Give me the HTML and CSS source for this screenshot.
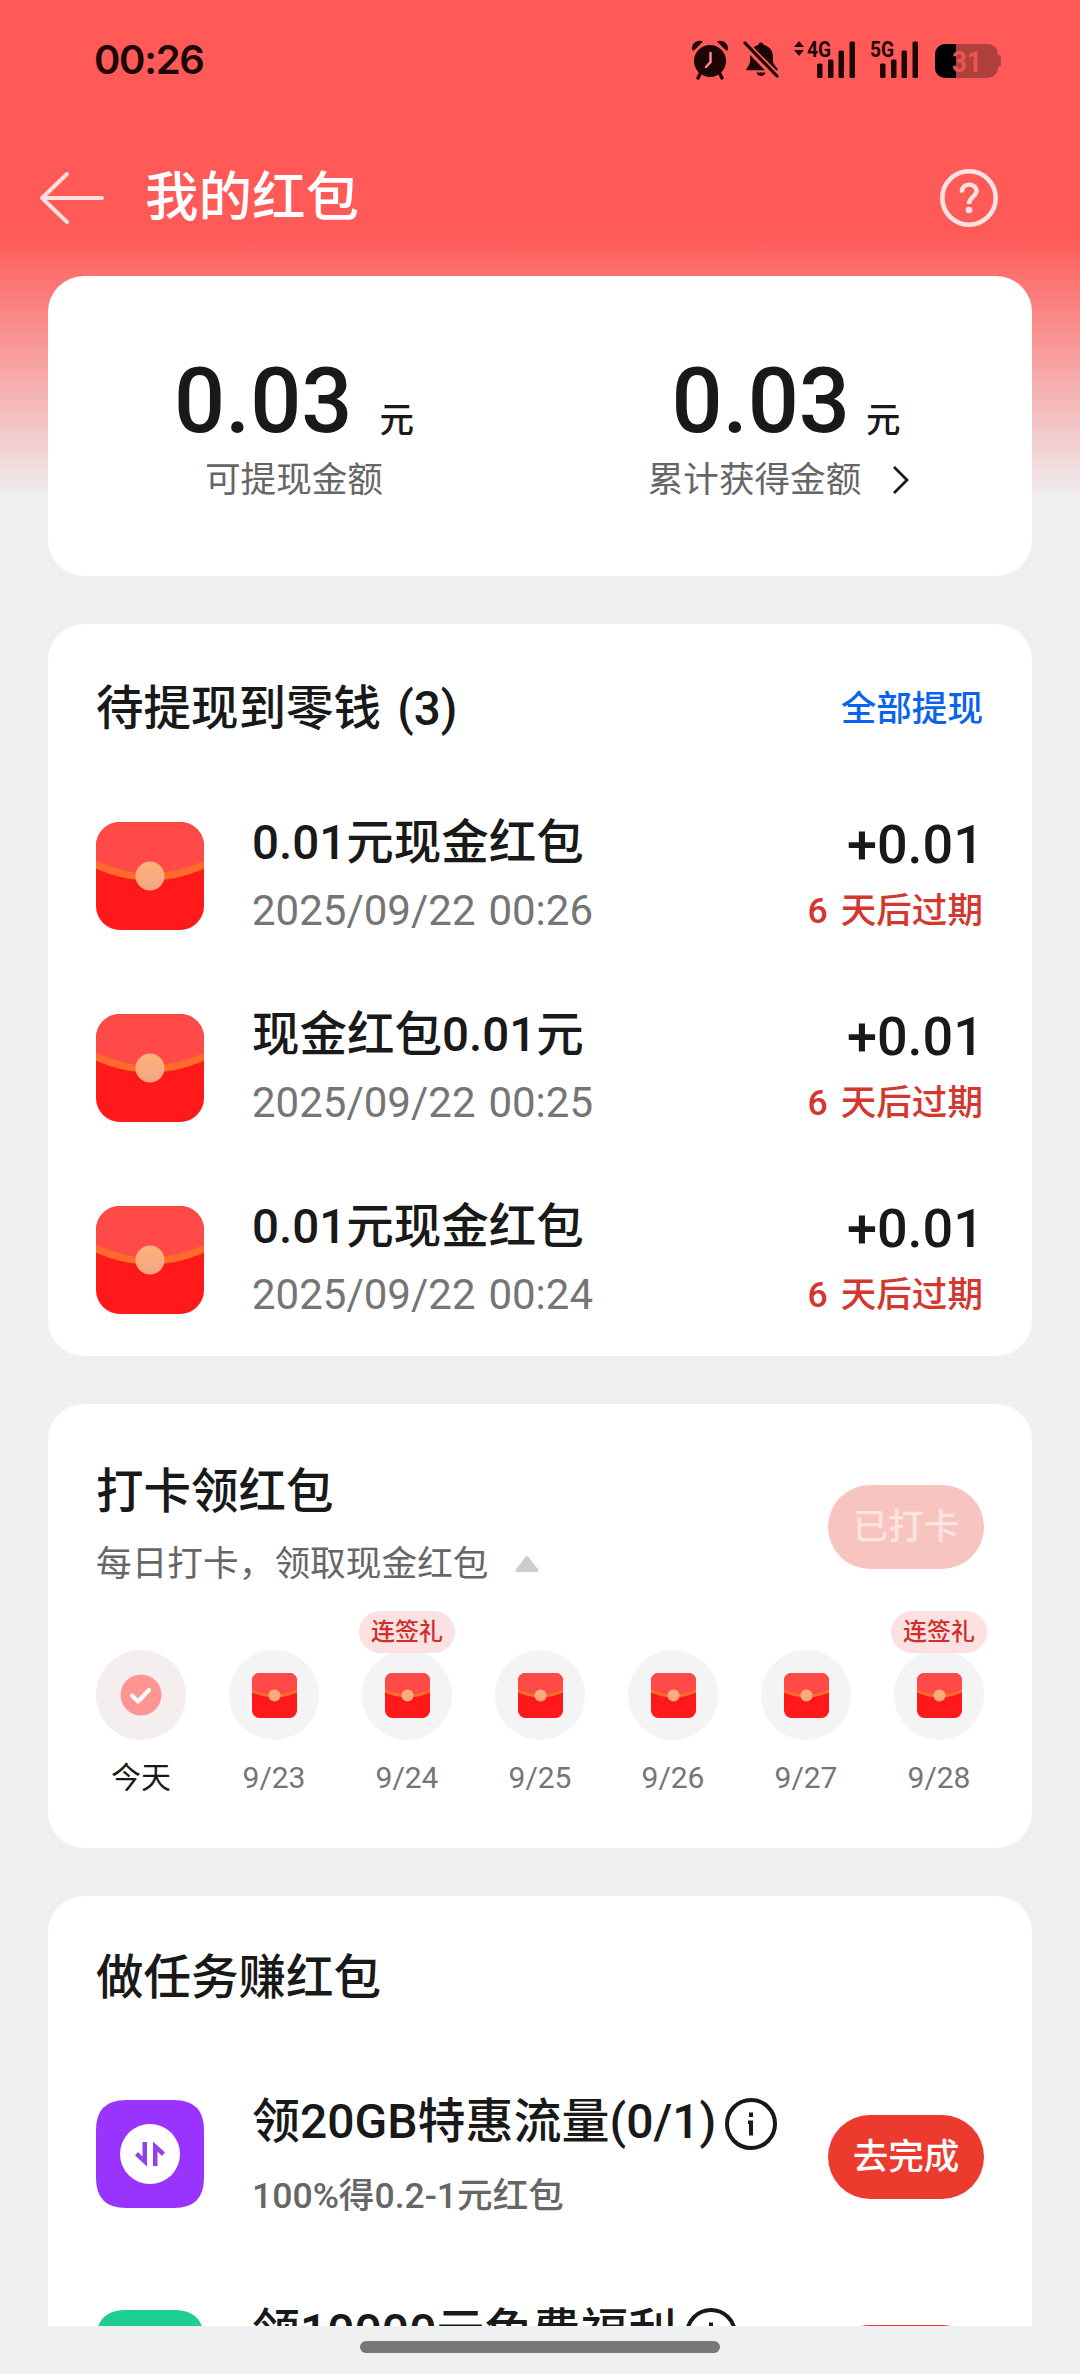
FILE: index.html
```html
<!DOCTYPE html>
<html lang="zh-CN">
<head>
<meta charset="utf-8">
<title>我的红包</title>
<link rel="stylesheet" href="styles.css">
</head>
<body>
<svg class="defs" width="0" height="0" aria-hidden="true">
  <defs>
    <linearGradient id="seal" x1="0" y1="0" x2="0" y2="1">
      <stop offset="0" stop-color="#ffb27c"/><stop offset="1" stop-color="#f6a385"/>
    </linearGradient>
    <clipPath id="envelope-clip"><rect width="108" height="108" rx="24"/></clipPath>
    <clipPath id="envelope-clip-small"><rect width="108" height="108" rx="18"/></clipPath>
    <g id="envelope-art">
      <rect width="108" height="108" fill="#ff191b"/>
      <path d="M0 0H108V46Q54 70 0 46Z" fill="#ff4a47"/>
      <path d="M-2 42Q54 68 110 42" fill="none" stroke="#ff6b2b" stroke-width="7"/>
      <circle cx="54" cy="54" r="14.5" fill="url(#seal)"/>
    </g>
    <symbol id="envelope" viewBox="0 0 108 108"><g clip-path="url(#envelope-clip)"><use href="#envelope-art"/></g></symbol>
    <symbol id="envelope-small" viewBox="0 0 108 108"><g clip-path="url(#envelope-clip-small)"><use href="#envelope-art"/></g></symbol>
    <symbol id="info" viewBox="0 0 52 52">
      <circle cx="26" cy="26" r="24" fill="none" stroke="#191919" stroke-width="4"/>
      <path d="M24 14.5h4v4.500h-4zM23 22.500h5v15h-4v-11.500h-1z" fill="#191919"/>
    </symbol>
  </defs>
</svg>

<div class="screen">
  <header class="status">
    <span class="clock">00:26</span>
    <div class="status-icons">
      <svg class="alarm" width="38" height="40" viewBox="0 0 38 40" fill="#1d0605">
        <circle cx="19" cy="21" r="16"/>
        <path d="M1 10C0 4 6-1 12 1.500L3 10.500ZM37 10C38 4 32-1 26 1.500L35 10.500Z"/>
        <path d="M9.500 33L7 38M28.500 33L31 38" stroke="#1d0605" stroke-width="3.500" stroke-linecap="round"/>
        <path d="M19.500 13v9l-4.500 5" fill="none" stroke="#ff8a86" stroke-width="2.500" stroke-linecap="round"/>
      </svg>
      <svg class="bell" width="38" height="40" viewBox="0 0 38 40" fill="#1d0605">
        <path d="M19 2.500c1.500 0 2.500 1 2.500 2.200 6 1.500 9.500 6 9.500 12.300v4c0 4 5 6.500 5 9.300H5.500C2 30.300 8 26 8 21v-4c0-6.300 3-10.800 8.500-12.300 0-1.200 1-2.200 2.500-2.200z"/>
        <path d="M14.500 32.500h9c-1 4.500-8 4.500-9 0z"/>
        <path d="M0 1L35 37" stroke="#ff5a57" stroke-width="8"/>
        <path d="M3 3L35 36" stroke="#1d0605" stroke-width="3.200" stroke-linecap="round"/>
      </svg>
      <svg class="signal-4g" width="64" height="40" viewBox="0 0 64 40" fill="#1d0605">
        <path d="M1 7L6 1l5 6zM1 10h10l-5 6z"/>
        <text x="14" y="17" class="net" textLength="24" lengthAdjust="spacingAndGlyphs">4G</text>
        <rect x="24" y="23.500" width="5.500" height="14.500" rx="1.500"/><rect x="35" y="19.500" width="5.500" height="18.500" rx="1.500"/>
        <rect x="45.500" y="10.500" width="5.500" height="27.500" rx="1.500"/><rect x="56.500" y="1.500" width="5.500" height="36.500" rx="1.500"/>
      </svg>
      <svg class="signal-5g" width="50" height="40" viewBox="0 0 50 40" fill="#1d0605">
        <text x="0" y="17" class="net" textLength="24" lengthAdjust="spacingAndGlyphs">5G</text>
        <rect x="10" y="23.500" width="5.500" height="14.500" rx="1.500"/><rect x="21" y="19.500" width="5.500" height="18.500" rx="1.500"/>
        <rect x="31.500" y="10.500" width="5.500" height="27.500" rx="1.500"/><rect x="42.500" y="1.500" width="5.500" height="36.500" rx="1.500"/>
      </svg>
      <svg class="battery" width="67" height="40" viewBox="0 0 67 40">
        <rect y="4" width="63" height="34" rx="10" fill="#b13f3d"/>
        <path d="M63 15a3 3 0 0 1 3 3v6a3 3 0 0 1-3 3z" fill="#b13f3d"/>
        <path d="M21 4H10A10 10 0 0 0 0 14v14a10 10 0 0 0 10 10h11z" fill="#000"/>
        <text x="17" y="32" class="charge" textLength="30" lengthAdjust="spacingAndGlyphs">31</text>
      </svg>
    </div>
  </header>

  <nav class="nav">
    <svg class="back" width="66" height="54" viewBox="0 0 66 54" fill="none" stroke="#ffdedd" stroke-width="4" stroke-linecap="round" stroke-linejoin="round"><path d="M28 3L3 27l25 24M3 27h60"/></svg>
    <h1>我的红包</h1>
    <svg class="help" width="60" height="60" viewBox="0 0 60 60" fill="none" stroke="#ffe3e2">
      <circle cx="30" cy="30" r="26.700" stroke-width="4.600"/>
      <path d="M23 24.500C22 14 37.500 14.500 37.500 23c0 5.500-7.500 6-7.500 13" stroke-width="4.400"/>
      <circle cx="30" cy="42" r="3.300" fill="#ffe3e2" stroke="none"/>
    </svg>
  </nav>

  <main class="content">
    <section class="card balance">
      <div class="balance-col available">
        <div class="amount"><strong>0.03</strong><span>元</span></div>
        <div class="caption">可提现金额</div>
      </div>
      <div class="balance-col total">
        <div class="amount"><strong>0.03</strong><span>元</span></div>
        <div class="caption">累计获得金额
          <svg class="chevron" width="18" height="30" viewBox="0 0 18 30" fill="none" stroke="#191919" stroke-width="2.800"><path d="M2 2l13 13L2 28"/></svg>
        </div>
      </div>
    </section>

    <section class="card pending">
      <div class="card-head">
        <h2>待提现到零钱 (3)</h2>
        <a class="withdraw">全部提现</a>
      </div>
      <ul class="packets">
        <li class="packet">
          <svg class="icon"><use href="#envelope"/></svg>
          <div class="info"><h3>0.01元现金红包</h3><time>2025/09/22 00:26</time></div>
          <div class="value"><b>+0.01</b><em>6 天后过期</em></div>
        </li>
        <li class="packet">
          <svg class="icon"><use href="#envelope"/></svg>
          <div class="info"><h3>现金红包0.01元</h3><time>2025/09/22 00:25</time></div>
          <div class="value"><b>+0.01</b><em>6 天后过期</em></div>
        </li>
        <li class="packet">
          <svg class="icon"><use href="#envelope"/></svg>
          <div class="info"><h3>0.01元现金红包</h3><time>2025/09/22 00:24</time></div>
          <div class="value"><b>+0.01</b><em>6 天后过期</em></div>
        </li>
      </ul>
    </section>

    <section class="card checkin">
      <div class="checkin-head">
        <div>
          <h2>打卡领红包</h2>
          <p class="hint">每日打卡，领取现金红包
            <svg width="26" height="18" viewBox="0 0 26 18"><path d="M13 2.500L23 15.500H3Z" fill="#ccc" stroke="#ccc" stroke-width="3" stroke-linejoin="round"/></svg>
          </p>
        </div>
        <button class="button done">已打卡</button>
      </div>
      <ol class="days">
        <li class="day today"><span class="disc"><svg width="42" height="42" viewBox="0 0 42 42"><circle cx="21" cy="21" r="20.500" fill="#ff9693"/><path d="M12 21.500l6 6L29 16" fill="none" stroke="#fff" stroke-width="4" stroke-linecap="round" stroke-linejoin="round"/></svg></span><span>今天</span></li>
        <li class="day"><span class="disc"><svg class="mini"><use href="#envelope-small"/></svg></span><span>9/23</span></li>
        <li class="day"><i class="badge">连签礼</i><span class="disc"><svg class="mini"><use href="#envelope-small"/></svg></span><span>9/24</span></li>
        <li class="day"><span class="disc"><svg class="mini"><use href="#envelope-small"/></svg></span><span>9/25</span></li>
        <li class="day"><span class="disc"><svg class="mini"><use href="#envelope-small"/></svg></span><span>9/26</span></li>
        <li class="day"><span class="disc"><svg class="mini"><use href="#envelope-small"/></svg></span><span>9/27</span></li>
        <li class="day"><i class="badge">连签礼</i><span class="disc"><svg class="mini"><use href="#envelope-small"/></svg></span><span>9/28</span></li>
      </ol>
    </section>

    <section class="card tasks">
      <h2>做任务赚红包</h2>
      <ul class="task-list">
        <li class="task">
          <svg class="icon" viewBox="0 0 108 108">
            <path d="M30 0Q54-.3 78 0Q108 0 108 30Q108.300 54 108 78Q108 108 78 108Q54 108.300 30 108Q0 108 0 78Q-.3 54 0 30Q0 0 30 0Z" fill="#9934ff"/>
            <circle cx="54" cy="54" r="30" fill="#fff"/>
            <path d="M46.500 42H51V66.500L39 55.500L42 52L46.500 56.500ZM61.500 66H57V41.500L69 52.500L66 56L61.500 51.500Z" fill="#9440e8"/>
          </svg>
          <div class="info"><h3>领20GB特惠流量(0/1)<svg class="info-icon"><use href="#info"/></svg></h3><p>100%得0.2-1元红包</p></div>
          <button class="button go">去完成</button>
        </li>
        <li class="task">
          <svg class="icon" viewBox="0 0 108 108"><path d="M30 0Q54-.3 78 0Q108 0 108 30Q108.300 54 108 78Q108 108 78 108Q54 108.300 30 108Q0 108 0 78Q-.3 54 0 30Q0 0 30 0Z" fill="#1dcd91"/></svg>
          <div class="info"><h3>领10000元免费福利<svg class="info-icon"><use href="#info"/></svg></h3></div>
          <button class="button go"></button>
        </li>
      </ul>
    </section>
  </main>

  <footer class="home-bar"><span></span></footer>
</div>
</body>
</html>
```

FILE: styles.css
```css
* { box-sizing: border-box; }

body, h1, h2, h3, p, ul, ol { margin: 0; padding: 0; }
ul, ol { list-style: none; }
h1, h2, h3, b, strong { font-weight: 500; }
em, i { font-style: normal; }
svg { display: block; flex: none; }
.defs { position: absolute; }

body {
  font-family: Roboto, "Noto Sans CJK SC", sans-serif;
  color: #191919;
  background: #eff0f2;
}

.screen {
  display: flex;
  flex-direction: column;
  width: 1080px;
  height: 2374px;
  overflow: hidden;
  background: linear-gradient(#ff5a57 0, #ff5a57 234px, #eff0f2 502px);
}

/* status bar */
.status {
  display: flex;
  align-items: center;
  justify-content: space-between;
  height: 120px;
  flex: none;
  padding: 0 78px 0 94px;
}
.clock { font: 600 40px/40px Inter, sans-serif; letter-spacing: -1.3px; color: #1d0605; }
.status-icons { display: flex; align-items: center; }
.status-icons svg { overflow: visible; }
.bell { margin-left: 13px; }
.signal-4g { margin-left: 13px; }
.signal-5g { margin-left: 13px; }
.battery { margin-left: 15px; }
.net { font: 700 22px Roboto, sans-serif; }
.charge { font: 700 30px Roboto, sans-serif; fill: #ea5552; }

/* title bar */
.nav {
  display: flex;
  align-items: center;
  flex: none;
  height: 156px;
  padding: 0 81px 0 39px;
}
.nav h1 { margin-left: 40px; font-size: 53.5px; line-height: 72px; color: #fff; }
.help { margin-left: auto; }

/* scrolling cards */
.content {
  display: flex;
  flex-direction: column;
  gap: 48px;
  height: 2050px;
  flex: none;
  padding: 0 48px;
  overflow: hidden;
}
.card { flex: none; padding: 0 48px; border-radius: 36px; background: #fff; }
.card h2 { font-size: 47.5px; line-height: 64px; word-spacing: 4.5px; }

.balance { display: flex; height: 300px; padding: 72px 0 0; }
.balance-col { display: flex; flex-direction: column; align-items: center; flex: 1; }
.amount { display: flex; align-items: baseline; height: 108px; line-height: 108px; }
.amount strong { font-size: 90px; }
.amount span { margin-left: 27px; font-size: 34.5px; font-weight: 500; }
.total .amount span { margin-left: 16px; }
.caption { display: flex; align-items: center; height: 48px; font-size: 35.6px; line-height: 48px; color: #666; }
.total .caption { padding-right: 14px; }
.chevron { margin-left: 31px; }

.pending { height: 732px; }
.card-head { display: flex; align-items: center; justify-content: space-between; padding-top: 53px; height: 117px; }
.withdraw { padding-right: 1px; font-size: 35.6px; font-weight: 500; line-height: 48px; color: #0a63ee; }
.packets { padding-top: 39px; }
.packet, .task { display: flex; align-items: center; }
.packet { height: 192px; }
.icon { width: 108px; height: 108px; }
.info { flex: 1; margin-left: 48px; }
.info h3 { font-size: 48px; line-height: 64px; }
.packet .info h3 { font-size: 47.5px; }
.packet time { display: block; font-size: 42px; line-height: 60px; margin-top: 6px; word-spacing: 2.5px; color: #757575; }
.value { text-align: right; }
.value b { display: block; font-size: 54px; line-height: 68px; }
.value em { display: block; margin-top: 2px; padding-right: 1px; font-size: 35.6px; font-weight: 500; line-height: 60px; word-spacing: 4px; color: #d3372f; }

.checkin { height: 444px; }
.checkin-head { display: flex; justify-content: space-between; padding-top: 56px; height: 246px; }
.hint { display: flex; align-items: center; margin-top: 16px; font-size: 35.7px; line-height: 48px; color: #666; }
.hint svg { margin-left: 25px; }
.button {
  width: 156px;
  height: 84px;
  padding: 0;
  border: 0;
  border-radius: 42px;
  font: 500 35.6px/84px Roboto, "Noto Sans CJK SC", sans-serif;
  text-align: center;
  color: #fff;
}
.done { margin-top: 25px; background: #f8c4c0; color: #fde3e1; }
.go { background: #ec3a2e; }
.days { display: flex; justify-content: space-between; }
.day { position: relative; display: flex; flex-direction: column; align-items: center; width: 90px; font-size: 30px; line-height: 40px; color: #757575; white-space: nowrap; }
.disc { display: flex; align-items: center; justify-content: center; width: 90px; height: 90px; margin-bottom: 18px; border-radius: 50%; background: #f4f4f4; }
.today { color: #191919; }
.today .disc { background: #f4eeee; }
.mini { width: 45px; height: 45px; margin-top: 1px; }
.badge { position: absolute; top: -39px; left: -3px; width: 96px; height: 42px; border-radius: 21px; background: #fbe1e1; font-size: 24px; font-weight: 500; line-height: 42px; text-align: center; color: #cf2f2b; }

.tasks { height: 720px; padding-top: 50px; }
.task-list { padding-top: 90px; }
.task { align-items: flex-start; height: 210px; }
.task .info { margin-top: -10px; }
.task h3 { display: flex; align-items: center; }
.info-icon { width: 52px; height: 52px; margin: 4px 0 0 9px; }
.task p { margin-top: 18px; font-size: 35.6px; font-weight: 500; line-height: 48px; color: #666; }
.task .button { margin-top: 15px; }

/* gesture area */
.home-bar { display: flex; justify-content: center; align-items: flex-start; flex: none; height: 48px; padding-top: 15px; background: #eff0f2; }
.home-bar span { width: 360px; height: 12px; border-radius: 6px; background: #777; }
```
